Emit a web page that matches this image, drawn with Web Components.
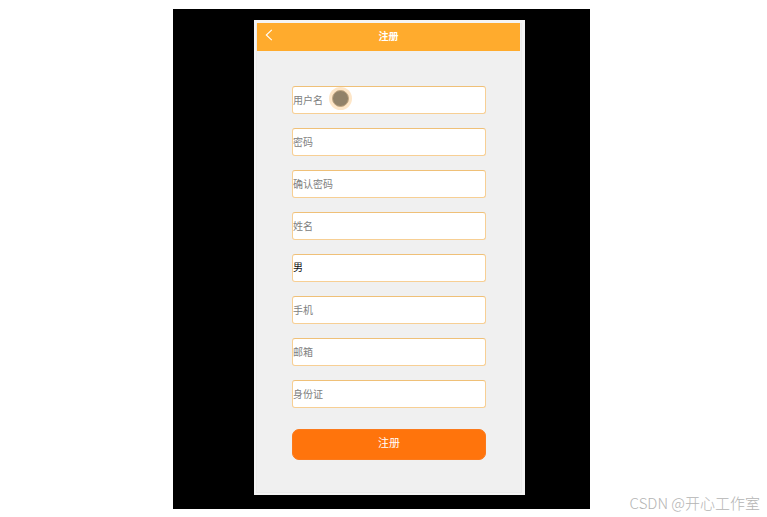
<!DOCTYPE html>
<html lang="zh-CN">
<head>
<meta charset="utf-8">
<meta name="viewport" content="width=device-width, initial-scale=1">
<title>注册</title>
<style>
  body { margin: 0; background: #fff; font-family: "Liberation Sans", "Noto Sans CJK SC", sans-serif; }
</style>
</head>
<body>
<register-page>
  <phone-frame>
    <title-bar slot="header">注册</title-bar>
    <register-form>
      <form-field label="用户名"></form-field>
      <form-field label="密码" type="password"></form-field>
      <form-field label="确认密码" type="password"></form-field>
      <form-field label="姓名"></form-field>
      <select-field label="性别" options="男,女"></select-field>
      <form-field label="手机" type="tel"></form-field>
      <form-field label="邮箱" type="email"></form-field>
      <form-field label="身份证"></form-field>
      <submit-button slot="action">注册</submit-button>
    </register-form>
    <touch-point slot="pointer"></touch-point>
  </phone-frame>
  <water-mark slot="mark">CSDN @开心工作室</water-mark>
</register-page>
<script>
  const define = (name, markup, setup) => {
    customElements.define(name, class extends HTMLElement {
      constructor() {
        super();
        this.attachShadow({ mode: "open" }).innerHTML =
          "<style>*{box-sizing:border-box}:host{box-sizing:border-box}</style>" + markup;
      }
      connectedCallback() { if (setup) setup(this, this.shadowRoot); }
    });
  };

  define("register-page", `
    <style>
      :host { display: flex; flex-direction: column; position: relative; min-height: 100vh; padding: 9px 177px 8px 173px; }
      main { flex: 1; display: flex; background: #000; padding: 11px 65px 14px 81px; }
      ::slotted(phone-frame) { flex: 1; min-width: 0; }
      @media (max-width: 600px) { :host { padding: 8px; } main { padding: 12px; } }
    </style>
    <main><slot></slot></main>
    <slot name="mark"></slot>`);

  define("phone-frame", `
    <style>
      :host { display: flex; position: relative; background: #f4f4f4; padding: 3px 3px 2px 2px; }
      section { flex: 1; min-width: 0; display: flex; flex-direction: column; background: #f0f0f0;
        border: solid #ebebeb; border-width: 0 1px 1px; padding-right: 1px; }
    </style>
    <section><slot name="header"></slot><slot></slot></section>
    <slot name="pointer"></slot>`);

  define("title-bar", `
    <style>
      :host { display: block; background: #ffab2d; color: #fff; }
      header { display: grid; grid-template-columns: 24px 1fr 24px; align-items: center; height: 28px; }
      button { display: grid; place-items: center; height: 28px; padding: 0 0 4px; border: 0; background: none; color: inherit; }
      h1 { margin: 0; text-align: center; font-size: 10px; line-height: 28px; font-weight: 700; }
      svg { display: block; }
    </style>
    <header>
      <button type="button" aria-label="返回">
        <svg width="8" height="12" viewBox="0 0 8 12" fill="none" stroke="currentColor" stroke-width="1.1"><path d="M6.8 .8 1.3 6l5.5 5.2"/></svg>
      </button>
      <h1><slot></slot></h1>
    </header>`);

  define("register-form", `
    <style>
      :host { display: block; padding: 35px 34px 32px 35px; }
      form { display: grid; gap: 21px; }
      .fields { display: grid; gap: 14px; }
    </style>
    <form><div class="fields"><slot></slot></div><slot name="action"></slot></form>`);

  const fieldStyle = `
    <style>
      :host { display: block; height: 28px; }
      input, select { display: block; width: 100%; height: 100%; margin: 0; padding: 0; border: 1px solid #f7cf94;
        border-top-color: #efc078; border-radius: 3px; background: #fff; color: #111; font: inherit; font-size: 10px;
        outline: 0; appearance: none; }
      select { padding-bottom: 2px; }
      input::placeholder { color: #808080; opacity: 1; }
    </style>`;

  define("form-field", fieldStyle + `<input>`, (host, root) => {
    const input = root.querySelector("input");
    input.type = host.getAttribute("type") || "text";
    input.placeholder = host.getAttribute("label");
    input.setAttribute("aria-label", host.getAttribute("label"));
  });

  define("select-field", fieldStyle + `<select></select>`, (host, root) => {
    const select = root.querySelector("select");
    select.setAttribute("aria-label", host.getAttribute("label"));
    select.replaceChildren(...host.getAttribute("options").split(",").map(o => new Option(o)));
  });

  define("submit-button", `
    <style>
      :host { display: block; }
      button { display: block; width: 100%; height: 31px; margin: 0; padding: 0 0 6px; border: 1px solid #fb7a1c;
        border-radius: 7px; background: #ff740c; color: #fff; font: inherit; font-size: 11px; }
    </style>
    <button type="submit"><slot></slot></button>`);

  /* Touch indicator floating over the first field. */
  define("touch-point", `
    <style>
      :host { position: absolute; left: 75px; top: 67px; width: 23px; height: 23px; border-radius: 50%;
        background: #fde6c8; display: grid; place-items: center; pointer-events: none; }
      i { width: 17px; height: 17px; border-radius: 50%; background: #918269; border: 1px solid #c0a580; }
    </style>
    <i></i>`);

  define("water-mark", `
    <style>
      :host { position: absolute; right: 7px; bottom: 4px; color: #b4b4b4; font-family: "Noto Sans CJK SC", sans-serif;
        font-size: 15px; line-height: 20px; font-weight: 300; white-space: nowrap; }
    </style>
    <slot></slot>`);
</script>
</body>
</html>
